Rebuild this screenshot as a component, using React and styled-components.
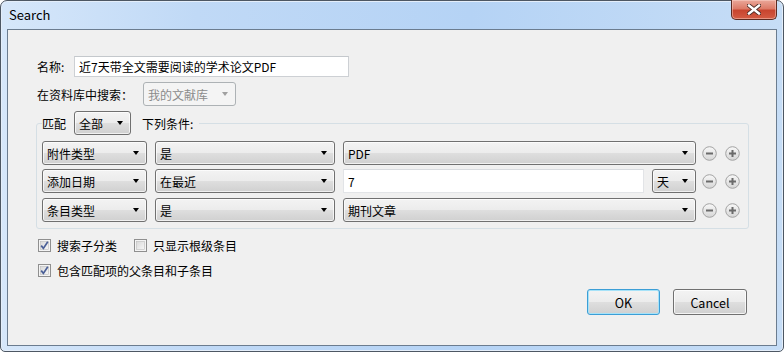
import React from "react";
import styled, { createGlobalStyle } from "styled-components";

const GlobalStyle = createGlobalStyle`
  html, body {
    margin: 0;
    padding: 0;
    background: #ffffff;
  }
  body {
    font-family: "Noto Sans CJK SC", "Noto Sans", sans-serif;
    font-size: 12px;
    color: #000;
  }
`;

const Window = styled.div`
  box-sizing: border-box;
  width: 784px;
  height: 352px;
  border: 1px solid #4d5763;
  border-radius: 7px 7px 5px 5px;
  background: linear-gradient(90deg, #d6e7fa 0%, #c0d9f6 25%, #b5d3f5 60%, #c6ddf6 100%);
  box-shadow: inset 0 0 0 1px #e4eefa;
  padding: 0 6px 5px 6px;
  display: flex;
  flex-direction: column;
`;

const TitleBar = styled.div`
  height: 28px;
  display: flex;
  justify-content: space-between;
  align-items: flex-start;
`;

const Title = styled.span`
  margin-top: 5px;
  margin-left: 2px;
  font-size: 13px;
  line-height: 18px;
  color: #000;
`;

const CloseButton = styled.div`
  box-sizing: border-box;
  width: 46px;
  height: 20px;
  margin-top: -1px;
  border: 1px solid #5c2b22;
  border-top: none;
  border-radius: 0 0 5px 5px;
  background: linear-gradient(#eaa89a 0%, #dd7b68 45%, #c8452f 55%, #d45c44 100%);
  box-shadow: inset 0 0 0 1px rgba(255, 220, 210, 0.45);
  display: flex;
  align-items: center;
  justify-content: center;
`;

const Client = styled.div`
  box-sizing: border-box;
  flex: 1;
  border: 1px solid #6b7c8f;
  background: #f0f0f0;
  padding: 0 0 0 29px;
  display: flex;
  flex-direction: column;
  align-items: flex-start;
`;

const Row = styled.div`
  display: flex;
  align-items: center;
  height: ${(p) => p.$h || 24}px;
  margin-top: ${(p) => p.$mt || 0}px;
`;

const Label = styled.span`
  width: ${(p) => p.$w}px;
  flex: none;
  white-space: nowrap;
`;

const TextInput = styled.div`
  box-sizing: border-box;
  width: ${(p) => p.$w}px;
  height: ${(p) => p.$h || 21}px;
  background: #fff;
  border: 1px solid ${(p) => p.$border || "#cdd0d4"};
  border-top-color: ${(p) => p.$top || "#c4c8cc"};
  padding-left: 4px;
  display: flex;
  align-items: center;
  white-space: nowrap;
  flex: none;
`;

const Combo = styled.div`
  box-sizing: border-box;
  width: ${(p) => p.$w}px;
  height: 24px;
  flex: none;
  border: 1px solid ${(p) => (p.$disabled ? "#adb2b5" : "#707070")};
  border-radius: 3px;
  background: ${(p) =>
    p.$disabled
      ? "#f4f4f4"
      : "linear-gradient(#f3f3f3 0%, #ececec 48%, #dedede 52%, #d0d0d0 100%)"};
  box-shadow: inset 0 0 0 1px ${(p) => (p.$disabled ? "#f4f4f4" : "rgba(255,255,255,0.7)")};
  color: ${(p) => (p.$disabled ? "#8b8b8b" : "#000")};
  padding-left: 4px;
  display: flex;
  align-items: center;
  position: relative;
  white-space: nowrap;

  &::after {
    content: "";
    position: absolute;
    right: 7px;
    top: 9px;
    border-left: 3.5px solid transparent;
    border-right: 3.5px solid transparent;
    border-top: 4px solid ${(p) => (p.$disabled ? "#a0a0a0" : "#000")};
  }
`;

const GroupBox = styled.fieldset`
  box-sizing: border-box;
  width: 713px;
  margin: 5px 0 0 -1px;
  padding: 6px 5px 6px 5px;
  border: 1px solid #d5dfe5;
  border-radius: 3px;
  display: flex;
  flex-direction: column;
  min-width: 0;
`;

const Legend = styled.legend`
  padding: 0 6px 0 0;
  margin: 0;
  display: flex;
  align-items: center;
  height: 24px;
`;

const LegendText = styled.span`
  margin-right: ${(p) => p.$mr || 0}px;
  margin-left: ${(p) => p.$ml || 0}px;
`;

const CondRow = styled.div`
  display: flex;
  align-items: center;
  height: 24px;
  margin-top: ${(p) => p.$mt || 0}px;
`;

const Spacer = styled.div`
  width: ${(p) => p.$w}px;
  flex: none;
`;

const RoundButton = styled.div`
  width: 15px;
  height: 15px;
  flex: none;
  display: flex;
`;

const CheckRow = styled.div`
  display: flex;
  align-items: center;
  height: 17px;
  margin-top: ${(p) => p.$mt}px;
  margin-left: 1px;
`;

const CheckItem = styled.label`
  display: flex;
  align-items: center;
  margin-right: ${(p) => p.$mr || 0}px;
`;

const CheckText = styled.span`
  margin-left: 6px;
`;

const ButtonBar = styled.div`
  align-self: stretch;
  display: flex;
  justify-content: flex-end;
  gap: 13px;
  margin-top: 10px;
  padding-right: 29px;
`;

const Button = styled.div`
  box-sizing: border-box;
  width: ${(p) => p.$w}px;
  height: 26px;
  border: 1px solid ${(p) => (p.$default ? "#3c9ed6" : "#707070")};
  border-radius: 3px;
  background: linear-gradient(#f3f3f3 0%, #ececec 48%, #dedede 52%, #d0d0d0 100%);
  box-shadow: inset 0 0 0 1px ${(p) => (p.$default ? "#a6e2f8" : "rgba(255,255,255,0.75)")};
  display: flex;
  align-items: center;
  justify-content: center;
  font-size: 12.5px;
`;

function CloseIcon() {
  return (
    <svg width="14" height="11" viewBox="0 0 14 11">
      <path d="M2 1.5 L12 9.5 M12 1.5 L2 9.5" stroke="#4a2a24" strokeWidth="4.2" strokeLinecap="square" />
      <path d="M2 1.5 L12 9.5 M12 1.5 L2 9.5" stroke="#ffffff" strokeWidth="2.4" strokeLinecap="square" />
    </svg>
  );
}

function Round({ plus }) {
  const id = plus ? "rgp" : "rgm";
  return (
    <RoundButton>
      <svg width="15" height="15" viewBox="0 0 15 15">
        <defs>
          <linearGradient id={id} x1="0" y1="0" x2="0" y2="1">
            <stop offset="0" stopColor="#f8f8f8" />
            <stop offset="1" stopColor="#d6d6d6" />
          </linearGradient>
        </defs>
        <circle cx="7.5" cy="7.5" r="6.8" fill={`url(#${id})`} stroke="#a3a3a3" />
        <rect x="4" y="6.5" width="7" height="2" fill="#6b6b6b" />
        {plus && <rect x="6.5" y="4" width="2" height="7" fill="#6b6b6b" />}
      </svg>
    </RoundButton>
  );
}

function CheckBox({ checked }) {
  return (
    <svg width="13" height="13" viewBox="0 0 13 13">
      <defs>
        <linearGradient id="cbg" x1="0" y1="0" x2="1" y2="1">
          <stop offset="0" stopColor="#d9d9d9" />
          <stop offset="1" stopColor="#f7f7f7" />
        </linearGradient>
      </defs>
      <rect x="0.5" y="0.5" width="12" height="12" fill="#f4f4f4" stroke="#8f8f8f" />
      <rect x="2.5" y="2.5" width="8" height="8" fill="url(#cbg)" stroke="#bcbcbc" strokeWidth="0.6" />
      {checked && (
        <path d="M3.2 6.6 L5.4 9.4 L9.8 2.8" fill="none" stroke="#4a5f97" strokeWidth="1.7" />
      )}
    </svg>
  );
}

function Conditions({ field, op, children }) {
  return (
    <>
      <Combo $w={105}>{field}</Combo>
      <Spacer $w={8} />
      <Combo $w={180}>{op}</Combo>
      <Spacer $w={8} />
      {children}
      <Spacer $w={6} />
      <Round />
      <Spacer $w={8} />
      <Round plus />
    </>
  );
}

export default function App() {
  return (
    <>
      <GlobalStyle />
      <Window>
        <TitleBar>
          <Title>Search</Title>
          <CloseButton>
            <CloseIcon />
          </CloseButton>
        </TitleBar>
        <Client>
          <Row $h={21} $mt={26}>
            <Label $w={37}>名称:</Label>
            <TextInput $w={275}>近7天带全文需要阅读的学术论文PDF</TextInput>
          </Row>
          <Row $mt={5}>
            <Label $w={106}>在资料库中搜索：</Label>
            <Combo $w={93} $disabled>我的文献库</Combo>
          </Row>
          <GroupBox>
            <Legend>
              <LegendText $mr={8}>匹配</LegendText>
              <Combo $w={57}>全部</Combo>
              <LegendText $ml={11}>下列条件:</LegendText>
            </Legend>
            <CondRow>
              <Conditions field="附件类型" op="是">
                <Combo $w={353}>PDF</Combo>
              </Conditions>
            </CondRow>
            <CondRow $mt={4}>
              <Conditions field="添加日期" op="在最近">
                <TextInput $w={301} $h={24} $border="#e2e4e7" $top="#d8dbdf">7</TextInput>
                <Spacer $w={8} />
                <Combo $w={44}>天</Combo>
              </Conditions>
            </CondRow>
            <CondRow $mt={5}>
              <Conditions field="条目类型" op="是">
                <Combo $w={353}>期刊文章</Combo>
              </Conditions>
            </CondRow>
          </GroupBox>
          <CheckRow $mt={8}>
            <CheckItem $mr={17}>
              <CheckBox checked />
              <CheckText>搜索子分类</CheckText>
            </CheckItem>
            <CheckItem>
              <CheckBox />
              <CheckText>只显示根级条目</CheckText>
            </CheckItem>
          </CheckRow>
          <CheckRow $mt={8}>
            <CheckItem>
              <CheckBox checked />
              <CheckText>包含匹配项的父条目和子条目</CheckText>
            </CheckItem>
          </CheckRow>
          <ButtonBar>
            <Button $w={73} $default>OK</Button>
            <Button $w={74}>Cancel</Button>
          </ButtonBar>
        </Client>
      </Window>
    </>
  );
}
